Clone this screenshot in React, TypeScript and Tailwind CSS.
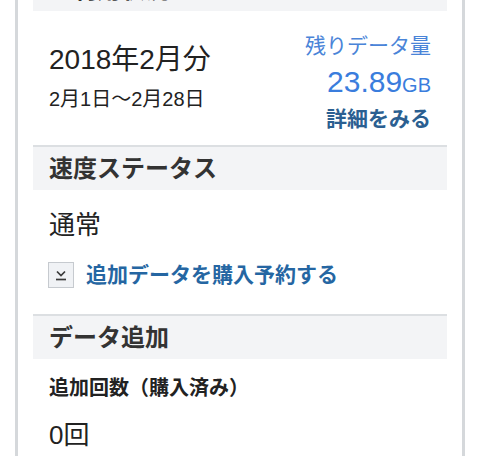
const font = { fontFamily: '"Liberation Sans", "Noto Sans CJK JP", sans-serif' };

function SectionHeader({ title, className = "" }: { title: string; className?: string }) {
  return (
    <div
      className={`h-[45px] shrink-0 flex items-center px-4 bg-[#f3f4f6] border-t-2 border-[#dcdfe2] text-[24px] leading-[28px] font-bold text-[#333] ${className}`}
    >
      {title}
    </div>
  );
}

export default function App() {
  return (
    <div className="w-[480px] h-[456px] overflow-hidden bg-white" style={font}>
      <div className="mx-[15px] h-full flex flex-col border-x-[3px] border-[#d5d8db] px-[15px]">
        <SectionHeader title="ご利用状況" className="-mt-[34px] border-t-0" />

        {/* 期間と残量 */}
        <div className="h-[134px] shrink-0 flex justify-between items-start px-4 pt-[22px]">
          <div className="mt-[11px] text-[#222]">
            <div className="text-[28px] leading-[32px]">2018年2月分</div>
            <div className="mt-[11px] text-[20px] leading-[24px]">2月1日～2月28日</div>
          </div>
          <div className="flex flex-col items-end">
            <div className="text-[21px] leading-[26px] text-[#4a84d8]">残りデータ量</div>
            <div className="mt-[6px] leading-[34px] text-[#3a7ddd]">
              <span className="text-[30px]">23.89</span>
              <span className="text-[20px]">GB</span>
            </div>
            <a href="#detail" className="mt-[2px] text-[21px] leading-[26px] font-bold text-[#2b5f91]">
              詳細をみる
            </a>
          </div>
        </div>

        <SectionHeader title="速度ステータス" />
        <div className="px-4 pt-[20px] pb-[26px]">
          <div className="text-[26px] leading-[30px] text-[#222]">通常</div>
          <a href="#reserve" className="mt-[22px] flex items-center gap-3 -ml-px">
            <span className="w-[26px] h-[26px] border border-[#c6cacf] bg-[#f0f2f5] flex items-center justify-center">
              <svg width="24" height="24" viewBox="0 0 24 24" fill="none" stroke="#3a3a3a" strokeWidth="1.7">
                <polyline points="8,8.5 12,12.5 16,8.5" />
                <line x1="7" y1="16.5" x2="17" y2="16.5" />
              </svg>
            </span>
            <span className="text-[21px] leading-[26px] font-bold text-[#2566a2]">追加データを購入予約する</span>
          </a>
        </div>

        <SectionHeader title="データ追加" />
        <div className="px-4 pt-[17px]">
          <div className="text-[20px] leading-[24px] font-bold text-[#222]">追加回数（購入済み）</div>
          <div className="mt-[20px] text-[26px] leading-[30px] text-[#222]">0回</div>
        </div>
      </div>
    </div>
  );
}
